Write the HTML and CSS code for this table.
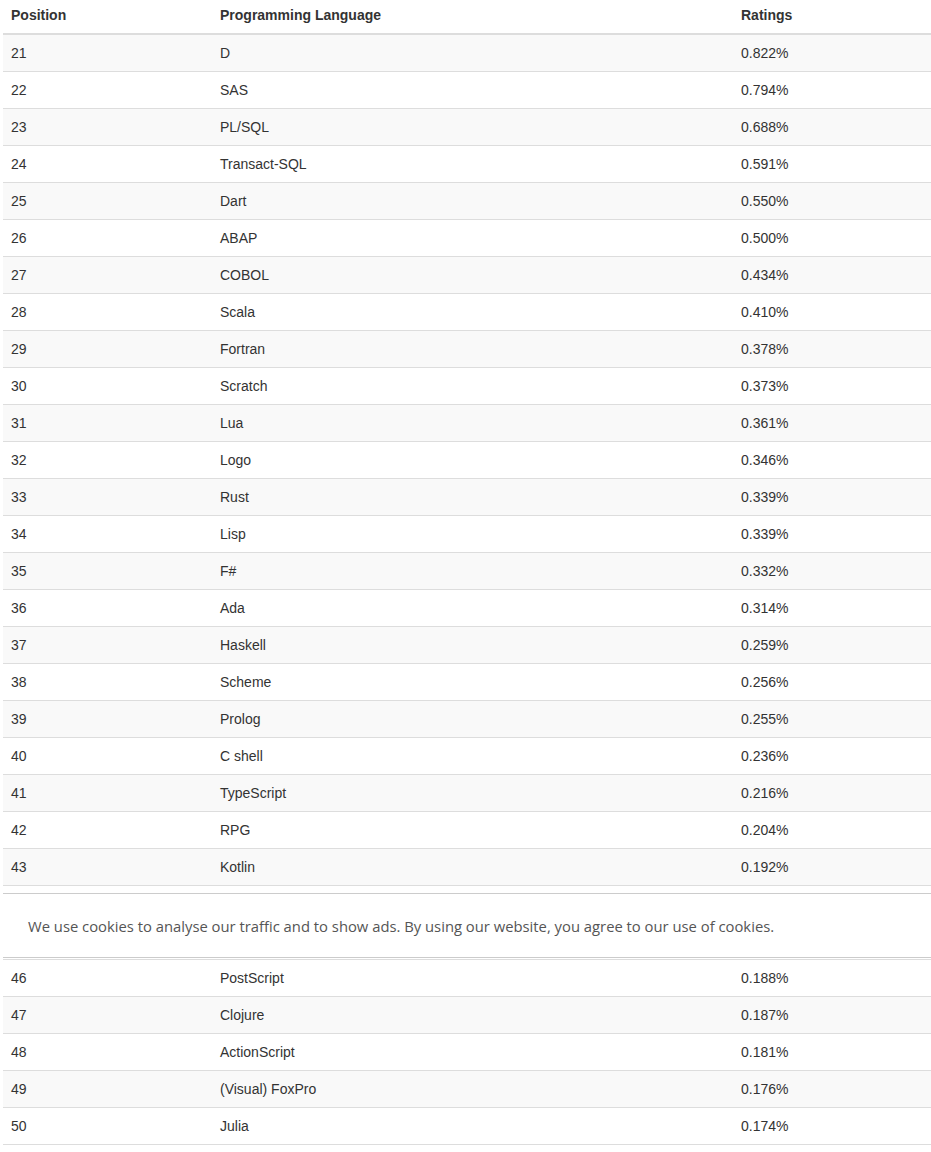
FILE: index.html
```html
<!DOCTYPE html>
<html>
<head>
<meta charset="utf-8">
<link rel="stylesheet" href="styles.css">
</head>
<body>
<div class="page">
<table class="ranking">
<colgroup><col class="c-pos"><col class="c-lang"><col class="c-rate"></colgroup>
<thead><tr><th>Position</th><th>Programming Language</th><th>Ratings</th></tr></thead>
<tbody>
<tr><td>21</td><td>D</td><td>0.822%</td></tr>
<tr><td>22</td><td>SAS</td><td>0.794%</td></tr>
<tr><td>23</td><td>PL/SQL</td><td>0.688%</td></tr>
<tr><td>24</td><td>Transact-SQL</td><td>0.591%</td></tr>
<tr><td>25</td><td>Dart</td><td>0.550%</td></tr>
<tr><td>26</td><td>ABAP</td><td>0.500%</td></tr>
<tr><td>27</td><td>COBOL</td><td>0.434%</td></tr>
<tr><td>28</td><td>Scala</td><td>0.410%</td></tr>
<tr><td>29</td><td>Fortran</td><td>0.378%</td></tr>
<tr><td>30</td><td>Scratch</td><td>0.373%</td></tr>
<tr><td>31</td><td>Lua</td><td>0.361%</td></tr>
<tr><td>32</td><td>Logo</td><td>0.346%</td></tr>
<tr><td>33</td><td>Rust</td><td>0.339%</td></tr>
<tr><td>34</td><td>Lisp</td><td>0.339%</td></tr>
<tr><td>35</td><td>F#</td><td>0.332%</td></tr>
<tr><td>36</td><td>Ada</td><td>0.314%</td></tr>
<tr><td>37</td><td>Haskell</td><td>0.259%</td></tr>
<tr><td>38</td><td>Scheme</td><td>0.256%</td></tr>
<tr><td>39</td><td>Prolog</td><td>0.255%</td></tr>
<tr><td>40</td><td>C shell</td><td>0.236%</td></tr>
<tr><td>41</td><td>TypeScript</td><td>0.216%</td></tr>
<tr><td>42</td><td>RPG</td><td>0.204%</td></tr>
<tr><td>43</td><td>Kotlin</td><td>0.192%</td></tr>
<tr class="covered"><td>44</td><td>Elixir</td><td>0.190%</td></tr>
<tr class="covered"><td>45</td><td>Groovy</td><td>0.189%</td></tr>
<tr><td>46</td><td>PostScript</td><td>0.188%</td></tr>
<tr><td>47</td><td>Clojure</td><td>0.187%</td></tr>
<tr><td>48</td><td>ActionScript</td><td>0.181%</td></tr>
<tr><td>49</td><td>(Visual) FoxPro</td><td>0.176%</td></tr>
<tr><td>50</td><td>Julia</td><td>0.174%</td></tr>
</tbody>
</table>
</div>
<div class="cookie-banner">
<p class="cookie-text">We use cookies to analyse our traffic and to show ads. By using our website, you agree to our use of cookies.</p>
</div>
</body>
</html>
```

FILE: styles.css
```css
html, body {
  margin: 0;
  padding: 0;
  background: #fff;
}
.page {
  padding-left: 3px;
}
.ranking {
  width: 928px;
  table-layout: fixed;
  border-collapse: collapse;
  border-spacing: 0;
  font-family: "Liberation Sans", Arial, sans-serif;
  font-size: 14px;
  line-height: 20px;
  color: #333;
}
.c-pos { width: 209px; }
.c-lang { width: 521px; }
.c-rate { width: 198px; }
.ranking th {
  text-align: left;
  font-weight: bold;
  padding: 5px 8px 8px 8px;
  border-bottom: 2px solid #ddd;
  vertical-align: bottom;
}
.ranking td {
  padding: 8px;
  border-top: 1px solid #ddd;
  vertical-align: top;
}
.ranking tbody tr:nth-child(odd) {
  background: #f9f9f9;
}
.ranking tbody tr:last-child td {
  border-bottom: 1px solid #ddd;
}
/* rows hidden beneath the fixed cookie banner */
.ranking tr.covered td {
  visibility: hidden;
}
.cookie-banner {
  position: fixed;
  top: 893px;
  left: 3px;
  right: 0;
  height: 63px;
  background: #fff;
  border-top: 1px solid #ccc;
  border-bottom: 1px solid #ccc;
  display: flex;
  align-items: center;
  padding-left: 25px;
}
.cookie-text {
  margin: 0;
  font-family: "Open Sans", "Noto Sans", sans-serif;
  font-size: 14.8px;
  color: #555;
}
```
